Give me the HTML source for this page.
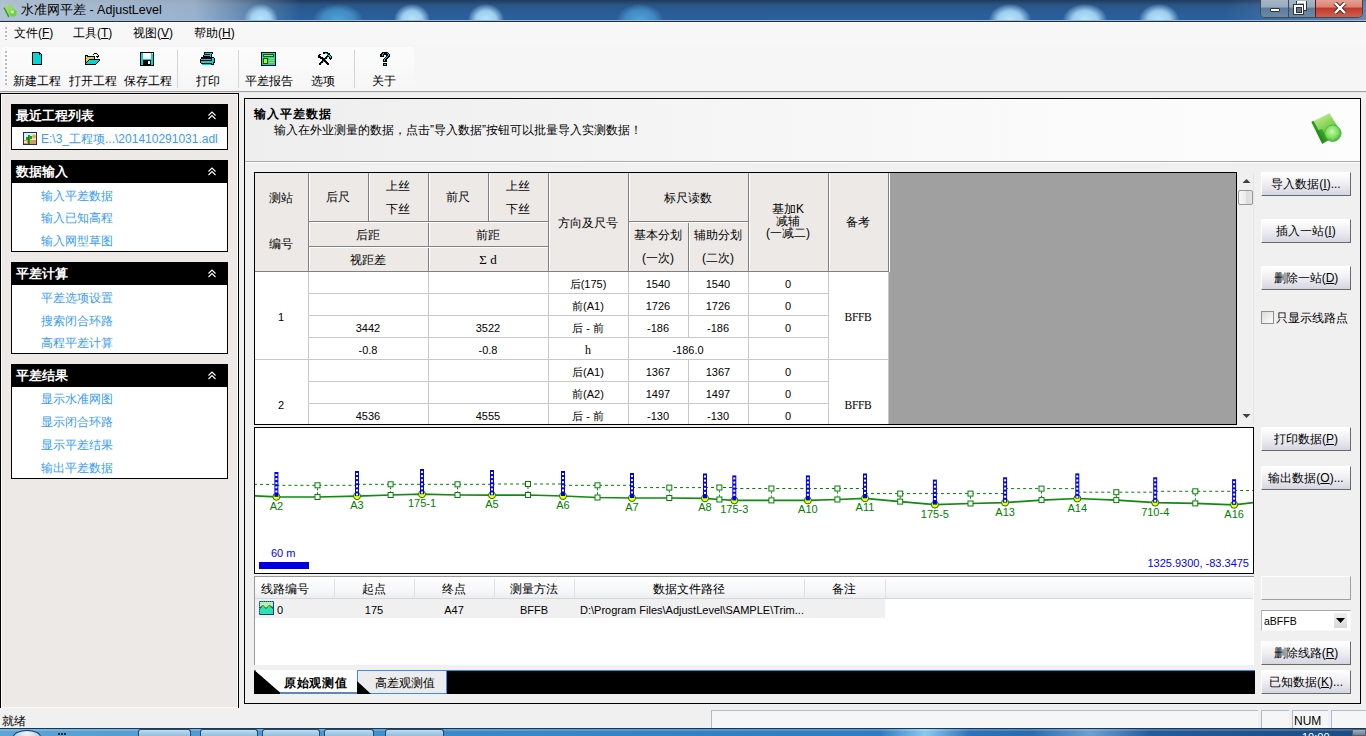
<!DOCTYPE html>
<html><head><meta charset="utf-8"><style>
*{box-sizing:border-box;margin:0;padding:0}
html,body{width:1366px;height:736px;overflow:hidden;background:#f0f0f0;font-family:"Liberation Sans",sans-serif;font-size:12px;color:#000}
.a{position:absolute}
.t{position:absolute;white-space:nowrap;line-height:12px}
.mono{font-family:"Liberation Mono",monospace;font-size:10px}
#title{left:0;top:0;width:1366px;height:20px;background:linear-gradient(180deg,#1f3a5c 0%,#2a5688 25%,#2a5e98 70%,#2660a0 100%);overflow:hidden}
.spot{position:absolute;border-radius:50%;background:radial-gradient(ellipse at center,rgba(185,228,252,1) 0%,rgba(170,218,248,.9) 40%,rgba(150,200,240,0) 72%)}
#menubar{left:0;top:23px;width:1366px;height:23px;background:#f7f7f7}
#toolbar{left:0;top:46px;width:1366px;height:45px;background:#f6f6f6}
.grip{position:absolute;width:2px;background:repeating-linear-gradient(180deg,#bcbcbc 0 2px,transparent 2px 4px)}
.sep{position:absolute;width:1px;background:#d5d5d5}
.hdr{position:absolute;left:11px;width:217px;height:23px;background:#000;color:#fff;font-weight:bold;font-size:13px}
.hdr span{position:absolute;left:5px;top:5px;line-height:13px}
.hdr i{position:absolute;left:197px;top:4px;font-style:normal;font-weight:normal;font-size:11px;line-height:11px}
.box{position:absolute;left:11px;width:217px;background:#fff;border:1px solid #000;border-top:none}
.lnk{position:absolute;left:41px;color:#3a9cf8;line-height:12px;white-space:nowrap}
.btn{position:absolute;left:1261px;width:90px;height:24px;border:1px solid #fff;border-right-color:#6a6a6a;border-bottom-color:#6a6a6a;background:linear-gradient(180deg,#ffffff 0%,#f2f2f6 40%,#d6d6e2 100%);text-align:center;line-height:22px;font-size:12px;white-space:nowrap}
.hc{position:absolute;background:#ece9e6;text-align:center}
.gl{position:absolute;background:#c8c8c8}
.dk{position:absolute;background:#808080}
.cell{position:absolute;text-align:center;white-space:nowrap;line-height:12px}
</style></head><body>
<div id="title" class="a">
<div class="a" style="left:0;top:0;width:300px;height:21px;background:linear-gradient(90deg,rgba(200,212,226,.85) 0%,rgba(190,205,222,.75) 65%,rgba(180,200,222,0) 100%)"></div>
<div class="spot" style="left:244px;top:4px;width:34px;height:32px"></div>
<div class="spot" style="left:394px;top:4px;width:36px;height:32px"></div>
<div class="spot" style="left:468px;top:4px;width:36px;height:32px"></div>
<div class="spot" style="left:989px;top:4px;width:42px;height:32px"></div>
<div class="spot" style="left:1063px;top:4px;width:44px;height:32px"></div>
<div class="spot" style="left:1139px;top:4px;width:40px;height:32px"></div>
<div class="a" style="left:313px;top:4px;width:50px;height:32px;border-radius:50%;background:radial-gradient(ellipse at center,rgba(80,170,225,.9) 0%,rgba(80,165,220,.6) 45%,rgba(80,160,220,0) 72%)"></div>
<div class="a" style="left:617px;top:4px;width:46px;height:32px;border-radius:50%;background:radial-gradient(ellipse at center,rgba(80,170,225,.9) 0%,rgba(80,165,220,.6) 45%,rgba(80,160,220,0) 72%)"></div>
<div class="a" style="left:1225px;top:0;width:141px;height:21px;background:linear-gradient(90deg,rgba(160,180,200,0),rgba(160,180,200,.5))"></div>
</div>
<div class="a" style="left:0;top:20px;width:1366px;height:1px;background:#a8bcd8"></div><div class="a" style="left:0;top:21px;width:1366px;height:1px;background:#1e2a40"></div><div class="a" style="left:0;top:22px;width:1366px;height:1px;background:#fff"></div>
<div class="t" style="left:21px;top:4px;font-size:12.5px;line-height:13px;color:#000">水准网平差 - AdjustLevel</div>
<div class="a" style="left:1260px;top:-1px;width:103px;height:19px;border:1px solid #3a4a5c;border-top:none;border-radius:0 0 5px 5px;overflow:hidden;background:#6f8aa8">
<div class="a" style="left:0;top:0;width:27px;height:18px;background:linear-gradient(180deg,#a9b8c8 0%,#96a9bd 45%,#5f7b9a 50%,#6d89a8 100%)"></div>
<div class="a" style="left:27px;top:0;width:1px;height:18px;background:#3a4a5c"></div>
<div class="a" style="left:28px;top:0;width:26px;height:18px;background:linear-gradient(180deg,#a9b8c8 0%,#96a9bd 45%,#5f7b9a 50%,#6d89a8 100%)"></div>
<div class="a" style="left:54px;top:0;width:1px;height:18px;background:#5a1a10"></div>
<div class="a" style="left:55px;top:0;width:48px;height:18px;background:linear-gradient(180deg,#e8a496 0%,#d98272 45%,#c0392b 50%,#d0604a 100%)"></div>
<div class="a" style="left:9px;top:9px;width:10px;height:4px;background:#fff;border:1px solid #333;border-radius:1px"></div>
<svg class="a" style="left:32px;top:2px" width="16" height="14" shape-rendering="crispEdges"><path d="M4 0 H13 V9 H11 V2 H4Z" fill="#fff" stroke="#333" stroke-width="0"/><rect x="3.5" y="-.5" width="10" height="10" fill="none" stroke="#333"/><rect x="4.5" y=".5" width="8" height="8" fill="none" stroke="#fff"/><rect x="0.5" y="3.5" width="10" height="10" fill="#fff" stroke="#333"/><rect x="3" y="6" width="5" height="5" fill="#5a7898" stroke="#333" stroke-width="1"/></svg>

<svg class="a" style="left:72px;top:3px" width="14" height="12"><path d="M2 1 L7 6 L12 1 M2 11 L7 6 L12 11" stroke="#3a2a2a" stroke-width="4.2" fill="none"/><path d="M2 1 L7 6 L12 1 M2 11 L7 6 L12 11" stroke="#fff" stroke-width="2.4" fill="none"/></svg>
</div>
<div id="menubar" class="a"></div>
<div class="grip" style="left:5px;top:27px;height:13px"></div>
<div class="t" style="left:14px;top:27px;font-size:12px">文件(<u>F</u>)</div>
<div class="t" style="left:73px;top:27px;font-size:12px">工具(<u>T</u>)</div>
<div class="t" style="left:133px;top:27px;font-size:12px">视图(<u>V</u>)</div>
<div class="t" style="left:194px;top:27px;font-size:12px">帮助(<u>H</u>)</div>
<div id="toolbar" class="a"></div>
<div class="a" style="left:2px;top:47px;width:412px;height:43px;border-radius:2px;background:linear-gradient(180deg,#fcfcfc,#f6f6f6)"></div>
<div class="a" style="left:0;top:91px;width:1366px;height:1px;background:#a0a0a0"></div>
<div class="a" style="left:0;top:92px;width:1366px;height:1px;background:#e8e8e8"></div>
<div class="grip" style="left:5px;top:51px;height:36px"></div>
<div class="sep" style="left:177px;top:50px;height:38px"></div>
<div class="sep" style="left:238px;top:50px;height:38px"></div>
<div class="sep" style="left:354px;top:50px;height:38px"></div>
<div class="t" style="left:13px;top:75px;font-size:12px">新建工程</div>
<div class="t" style="left:69px;top:75px;font-size:12px">打开工程</div>
<div class="t" style="left:124px;top:75px;font-size:12px">保存工程</div>
<div class="t" style="left:196px;top:75px;font-size:12px">打印</div>
<div class="t" style="left:245px;top:75px;font-size:12px">平差报告</div>
<div class="t" style="left:311px;top:75px;font-size:12px">选项</div>
<div class="t" style="left:372px;top:75px;font-size:12px">关于</div>
<svg class="a" style="left:32px;top:52px" width="11" height="13" shape-rendering="crispEdges"><path d="M0 0 H8 V1 H9 V2 H10 V13 H0Z" fill="#000"/><path d="M1 1 H7 V3 H9 V12 H1Z" fill="#00d8d8"/><rect x="8" y="2" width="1" height="1" fill="#00d8d8"/></svg>
<svg class="a" style="left:85px;top:52px" width="16" height="14" shape-rendering="crispEdges">
<path d="M0 3 H3 V4 H10 V7 H15 V8 L11 13 H0Z" fill="#000"/><path d="M1 4 H2 V5 H9 V7 H4 L1 11Z" fill="#d8d040"/><path d="M4 8 H14 L10 12 H1Z" fill="#00d8d8"/>
<path d="M8 2 H9 V1 H12 V2 H13 V3 H14 V5 H13 V6 H12 V5 H11 V4 H13 V3 H12 V2 H9 V3 H8Z" fill="#000"/></svg>
<svg class="a" style="left:140px;top:52px" width="14" height="14" shape-rendering="crispEdges"><rect x="0" y="0" width="14" height="14" fill="#000"/><rect x="1" y="1" width="12" height="12" fill="#00d8d8"/><rect x="3" y="1" width="8" height="6" fill="#fff"/><rect x="3" y="8" width="8" height="5" fill="#000"/><rect x="8" y="9" width="2" height="3" fill="#fff"/><rect x="12" y="1" width="1" height="1" fill="#fff"/></svg>
<svg class="a" style="left:200px;top:52px" width="16" height="14" shape-rendering="crispEdges">
<path d="M4 0 H13 V2 H12 V5 H3 V3 H4Z" fill="#000"/><path d="M5 1 H12 V2 H11 V5 H4 V3 H5Z" fill="#00d8d8"/><rect x="5" y="2" width="5" height="1" fill="#000"/><rect x="4" y="4" width="6" height="1" fill="#000"/>
<path d="M1 5 H14 V6 H15 V11 H14 V13 H2 V12 H1 V11 H0 V7 H1Z" fill="#000"/><path d="M1 7 H11 V8 H1Z M1 9 H12 V11 H1Z M2 12 H11 V13 H2Z M12 6 H14 V10 H13 V12 H12Z" fill="#00d8d8"/></svg>
<svg class="a" style="left:261px;top:52px" width="15" height="14" shape-rendering="crispEdges"><rect width="15" height="14" fill="#000"/><rect x="1" y="1" width="13" height="12" fill="#00d8d8"/>
<rect x="2" y="2" width="11" height="3" fill="#006000"/><rect x="3" y="3" width="9" height="1" fill="#e0d800"/><rect x="2" y="6" width="5" height="6" fill="#006000"/><rect x="3" y="7" width="3" height="4" fill="#e8e000"/>
<rect x="8" y="6" width="5" height="1" fill="#e0c800"/><rect x="8" y="8" width="5" height="1" fill="#e0c800"/><rect x="8" y="10" width="5" height="1" fill="#e0c800"/></svg>
<svg class="a" style="left:317px;top:52px" width="16" height="14" shape-rendering="crispEdges">
<path d="M2 2 H4 V3 H3 V4 H4 V5 H6 V6 H7 V7 H8 V8 H9 V9 H10 V10 H11 V11 H12 V13 H10 V12 H9 V11 H8 V10 H7 V9 H6 V8 H5 V7 H3 V6 H1 V3 H2Z" fill="#000"/>
<path d="M6 0 H11 V1 H13 V3 H14 V4 H15 V7 H14 V8 H13 V7 H12 V5 H11 V6 H10 V7 H9 V8 H8 V9 H7 V10 H6 V11 H5 V12 H4 V13 H2 V11 H3 V10 H4 V9 H5 V8 H6 V7 H7 V6 H8 V5 H9 V4 H10 V2 H6Z" fill="#000"/>
<path d="M8 1 H10 V2 H11 V3 H13 V4 H14 V6 H13 V5 H12 V4 H11 V3 H10 V2 H8Z" fill="#00d8d8"/><path d="M10 5 H11 V6 H10Z M8 7 H9 V8 H8Z M6 9 H7 V10 H6Z M4 11 H5 V12 H4Z" fill="#00d8d8"/></svg>
<svg class="a" style="left:380px;top:52px" width="10" height="14" shape-rendering="crispEdges">
<path d="M2 0 H8 V1 H9 V2 H10 V5 H9 V6 H8 V7 H7 V10 H3 V7 H4 V6 H5 V5 H6 V3 H4 V5 H0 V2 H1 V1 H2Z" fill="#000"/>
<path d="M3 1 H7 V2 H8 V4 H7 V5 H6 V6 H5 V7 H4 V9 H5 V7 H6 V6 H7 V5 H8 V4 H9 V2 H8 V1 H7Z M2 2 H3 V4 H2Z M3 1 H4 V2 H3Z" fill="#00d8d8"/>
<path d="M3 11 H7 V14 H3Z" fill="#000"/><rect x="4" y="12" width="2" height="1" fill="#00d8d8"/></svg>
<svg class="a" style="left:1px;top:3px" width="18" height="16" viewBox="0 0 36 36">
<path d="M3.4 11 L21.5 2.3 L33.8 22.3 L14.3 32.8 Z" fill="#9ad86a"/><path d="M3.4 11 L5.5 9.8 L16.5 30 L14.3 32.8 Z" fill="#2a9a20"/>
<circle cx="24.8" cy="22.3" r="8.2" fill="#6cd04a"/><circle cx="23" cy="20" r="4" fill="#c0f0a0"/></svg>
<div class="a" style="left:0;top:93px;width:239px;height:616px;background:#ece9e6;border:1px solid #000"></div>
<div class="a" style="left:1px;top:94px;width:237px;height:614px;border:1px solid #fbfaf8"></div>
<div class="hdr" style="top:104px"><span>最近工程列表</span><svg class="a" style="left:196px;top:6px" width="10" height="10"><path d="M1.5 5.5 L5 2 L8.5 5.5 M1.5 9 L5 5.5 L8.5 9" fill="none" stroke="#fff" stroke-width="1.1"/></svg></div>
<div class="box" style="top:127px;height:23px"></div>
<div class="hdr" style="top:160px"><span>数据输入</span><svg class="a" style="left:196px;top:6px" width="10" height="10"><path d="M1.5 5.5 L5 2 L8.5 5.5 M1.5 9 L5 5.5 L8.5 9" fill="none" stroke="#fff" stroke-width="1.1"/></svg></div>
<div class="box" style="top:183px;height:69px"></div>
<div class="lnk t" style="top:190px">输入平差数据</div>
<div class="lnk t" style="top:212px">输入已知高程</div>
<div class="lnk t" style="top:235px">输入网型草图</div>
<div class="hdr" style="top:262px"><span>平差计算</span><svg class="a" style="left:196px;top:6px" width="10" height="10"><path d="M1.5 5.5 L5 2 L8.5 5.5 M1.5 9 L5 5.5 L8.5 9" fill="none" stroke="#fff" stroke-width="1.1"/></svg></div>
<div class="box" style="top:285px;height:69px"></div>
<div class="lnk t" style="top:292px">平差选项设置</div>
<div class="lnk t" style="top:315px">搜索闭合环路</div>
<div class="lnk t" style="top:337px">高程平差计算</div>
<div class="hdr" style="top:364px"><span>平差结果</span><svg class="a" style="left:196px;top:6px" width="10" height="10"><path d="M1.5 5.5 L5 2 L8.5 5.5 M1.5 9 L5 5.5 L8.5 9" fill="none" stroke="#fff" stroke-width="1.1"/></svg></div>
<div class="box" style="top:387px;height:92px"></div>
<div class="lnk t" style="top:393px">显示水准网图</div>
<div class="lnk t" style="top:416px">显示闭合环路</div>
<div class="lnk t" style="top:439px">显示平差结果</div>
<div class="lnk t" style="top:462px">输出平差数据</div>
<svg class="a" style="left:23px;top:132px" width="14" height="13" shape-rendering="crispEdges"><rect x="0" y="0" width="14" height="13" fill="#2a2a70"/><rect x="1" y="1" width="12" height="11" fill="#d8ecfc"/><rect x="1" y="8" width="12" height="4" fill="#d89858"/><rect x="1" y="9" width="3" height="2" fill="#f0e890"/>
<circle cx="11" cy="4.5" r="2" fill="#f0b020" shape-rendering="auto"/><path d="M5 12 V3 H7 V12Z M3 5 H5 V8 H3Z M7 4 H9 V7 H7Z" fill="#20a020"/><path d="M5 3 H6 V12 H5Z" fill="#108010"/></svg>
<div class="lnk t" style="top:133px">E:\3_工程项...\201410291031.adl</div>
<div class="a" style="left:244px;top:98px;width:1117px;height:606px;border:1px solid #000;background:#f0f0f0"></div>
<div class="a" style="left:245px;top:99px;width:1115px;height:62px;background:linear-gradient(90deg,#eeeeee 0%,#f4f4f4 35%,#fafafa 70%,#fdfdfd 100%)"></div>
<div class="a" style="left:245px;top:161px;width:1115px;height:1px;background:#a8a8a8"></div>
<div class="a" style="left:245px;top:162px;width:1115px;height:1px;background:#fff"></div>
<div class="t" style="left:254px;top:108px;font-weight:bold;font-size:12px;letter-spacing:1px">输入平差数据</div>
<div class="t" style="left:274px;top:124px;font-size:12px">输入在外业测量的数据，点击”导入数据”按钮可以批量导入实测数据！</div>
<svg class="a" style="left:1308px;top:111px" width="36" height="36" viewBox="0 0 36 36">
<defs><linearGradient id="gm" x1="0" y1="0" x2=".6" y2="1"><stop offset="0" stop-color="#d8f5b8"/><stop offset=".45" stop-color="#8ed85a"/><stop offset="1" stop-color="#3aa82a"/></linearGradient>
<radialGradient id="gb" cx=".45" cy=".4" r=".65"><stop offset="0" stop-color="#c8f8b0"/><stop offset=".6" stop-color="#78dc58"/><stop offset="1" stop-color="#2aa42a"/></radialGradient></defs>
<path d="M3.4 11 L21.5 2.3 L33.8 22.3 L14.3 32.8 Z" fill="url(#gm)"/>
<path d="M3.4 11 L5.5 9.8 L16.5 30 L14.3 32.8 Z" fill="#2a9a20"/>
<path d="M8 20 L14.3 32.8 L20 29 L14 18Z" fill="#1f8a18" opacity=".7"/>
<circle cx="24.8" cy="22.3" r="8.2" fill="url(#gb)" stroke="#3cb43c" stroke-width=".8"/>
<path d="M17 22.3 H32.6 M24.8 14.3 V30.3" stroke="#b8f0a0" stroke-width=".5" opacity=".6"/>
</svg>
<div class="a" style="left:254px;top:172px;width:983px;height:253px;border:1px solid #000;background:#fff"></div>
<div class="a" style="left:889px;top:173px;width:347px;height:251px;background:#a0a0a0"></div>
<div class="a" style="left:255px;top:173px;width:634px;height:99px;background:#ece9e6"></div>
<div class="dk" style="left:308px;top:173px;width:1px;height:99px"></div>
<div class="a" style="left:309px;top:173px;width:1px;height:99px;background:#fff"></div>
<div class="dk" style="left:428px;top:173px;width:1px;height:99px"></div>
<div class="a" style="left:429px;top:173px;width:1px;height:99px;background:#fff"></div>
<div class="dk" style="left:548px;top:173px;width:1px;height:99px"></div>
<div class="a" style="left:549px;top:173px;width:1px;height:99px;background:#fff"></div>
<div class="dk" style="left:628px;top:173px;width:1px;height:99px"></div>
<div class="a" style="left:629px;top:173px;width:1px;height:99px;background:#fff"></div>
<div class="dk" style="left:748px;top:173px;width:1px;height:99px"></div>
<div class="a" style="left:749px;top:173px;width:1px;height:99px;background:#fff"></div>
<div class="dk" style="left:828px;top:173px;width:1px;height:99px"></div>
<div class="a" style="left:829px;top:173px;width:1px;height:99px;background:#fff"></div>
<div class="dk" style="left:888px;top:173px;width:1px;height:99px"></div>
<div class="a" style="left:889px;top:173px;width:1px;height:99px;background:#fff"></div>
<div class="dk" style="left:368px;top:173px;width:1px;height:49px"></div>
<div class="a" style="left:369px;top:173px;width:1px;height:49px;background:#fff"></div>
<div class="dk" style="left:488px;top:173px;width:1px;height:49px"></div>
<div class="a" style="left:489px;top:173px;width:1px;height:49px;background:#fff"></div>
<div class="dk" style="left:688px;top:222px;width:1px;height:50px"></div>
<div class="a" style="left:689px;top:222px;width:1px;height:50px;background:#fff"></div>
<div class="dk" style="left:309px;top:221px;width:239px;height:1px"></div>
<div class="a" style="left:309px;top:222px;width:239px;height:1px;background:#fff"></div>
<div class="dk" style="left:309px;top:246px;width:239px;height:1px"></div>
<div class="a" style="left:309px;top:247px;width:239px;height:1px;background:#fff"></div>
<div class="dk" style="left:629px;top:221px;width:119px;height:1px"></div>
<div class="a" style="left:629px;top:222px;width:119px;height:1px;background:#fff"></div>
<div class="dk" style="left:255px;top:271px;width:634px;height:1px"></div>
<div class="a" style="left:255px;top:272px;width:634px;height:1px;background:#fff"></div>
<div class="cell" style="left:221px;top:192px;width:120px;">测站</div>
<div class="cell" style="left:221px;top:238px;width:120px;">编号</div>
<div class="cell" style="left:278px;top:191px;width:120px;">后尺</div>
<div class="cell" style="left:338px;top:180px;width:120px;">上丝</div>
<div class="cell" style="left:338px;top:203px;width:120px;">下丝</div>
<div class="cell" style="left:398px;top:191px;width:120px;">前尺</div>
<div class="cell" style="left:458px;top:180px;width:120px;">上丝</div>
<div class="cell" style="left:458px;top:203px;width:120px;">下丝</div>
<div class="cell" style="left:308px;top:229px;width:120px;">后距</div>
<div class="cell" style="left:428px;top:229px;width:120px;">前距</div>
<div class="cell" style="left:308px;top:254px;width:120px;">视距差</div>
<div class="cell" style="left:428px;top:254px;width:120px;font-family:Liberation Serif,serif;font-size:13px">Σ d</div>
<div class="cell" style="left:528px;top:217px;width:120px;">方向及尺号</div>
<div class="cell" style="left:628px;top:192px;width:120px;">标尺读数</div>
<div class="cell" style="left:598px;top:229px;width:120px;">基本分划</div>
<div class="cell" style="left:658px;top:229px;width:120px;">辅助分划</div>
<div class="cell" style="left:598px;top:252px;width:120px;">(一次)</div>
<div class="cell" style="left:658px;top:252px;width:120px;">(二次)</div>
<div class="cell" style="left:728px;top:203px;width:120px;">基加K</div>
<div class="cell" style="left:728px;top:215px;width:120px;">减辅</div>
<div class="cell" style="left:728px;top:227px;width:120px;">(一减二)</div>
<div class="cell" style="left:798px;top:216px;width:120px;">备考</div>
<div class="gl" style="left:309px;top:293px;width:520px;height:1px"></div>
<div class="gl" style="left:309px;top:315px;width:520px;height:1px"></div>
<div class="gl" style="left:309px;top:337px;width:520px;height:1px"></div>
<div class="gl" style="left:309px;top:381px;width:520px;height:1px"></div>
<div class="gl" style="left:309px;top:403px;width:520px;height:1px"></div>
<div class="gl" style="left:255px;top:359px;width:634px;height:1px"></div>
<div class="gl" style="left:308px;top:272px;width:1px;height:152px"></div>
<div class="gl" style="left:428px;top:272px;width:1px;height:152px"></div>
<div class="gl" style="left:548px;top:272px;width:1px;height:152px"></div>
<div class="gl" style="left:628px;top:272px;width:1px;height:152px"></div>
<div class="gl" style="left:748px;top:272px;width:1px;height:152px"></div>
<div class="gl" style="left:828px;top:272px;width:1px;height:152px"></div>
<div class="gl" style="left:688px;top:272px;width:1px;height:65px"></div>
<div class="gl" style="left:688px;top:359px;width:1px;height:65px"></div>
<div class="gl" style="left:888px;top:272px;width:1px;height:152px"></div>
<div class="cell" style="left:221px;top:311.5px;width:120px;font-size:11px;line-height:11px">1</div>
<div class="cell" style="left:221px;top:399.5px;width:120px;font-size:11px;line-height:11px">2</div>
<div class="cell" style="left:308px;top:322.5px;width:120px;font-size:11px;line-height:11px">3442</div>
<div class="cell" style="left:428px;top:322.5px;width:120px;font-size:11px;line-height:11px">3522</div>
<div class="cell" style="left:308px;top:344.5px;width:120px;font-size:11px;line-height:11px">-0.8</div>
<div class="cell" style="left:428px;top:344.5px;width:120px;font-size:11px;line-height:11px">-0.8</div>
<div class="cell" style="left:308px;top:410.5px;width:120px;font-size:11px;line-height:11px">4536</div>
<div class="cell" style="left:428px;top:410.5px;width:120px;font-size:11px;line-height:11px">4555</div>
<div class="cell" style="left:528px;top:278.5px;width:120px;font-size:11px;line-height:11px">后(175)</div>
<div class="cell" style="left:598px;top:278.5px;width:120px;font-size:11px;line-height:11px">1540</div>
<div class="cell" style="left:658px;top:278.5px;width:120px;font-size:11px;line-height:11px">1540</div>
<div class="cell" style="left:728px;top:278.5px;width:120px;font-size:11px;line-height:11px">0</div>
<div class="cell" style="left:528px;top:300.5px;width:120px;font-size:11px;line-height:11px">前(A1)</div>
<div class="cell" style="left:598px;top:300.5px;width:120px;font-size:11px;line-height:11px">1726</div>
<div class="cell" style="left:658px;top:300.5px;width:120px;font-size:11px;line-height:11px">1726</div>
<div class="cell" style="left:728px;top:300.5px;width:120px;font-size:11px;line-height:11px">0</div>
<div class="cell" style="left:528px;top:322.5px;width:120px;font-size:11px;line-height:11px">后 - 前</div>
<div class="cell" style="left:598px;top:322.5px;width:120px;font-size:11px;line-height:11px">-186</div>
<div class="cell" style="left:658px;top:322.5px;width:120px;font-size:11px;line-height:11px">-186</div>
<div class="cell" style="left:728px;top:322.5px;width:120px;font-size:11px;line-height:11px">0</div>
<div class="cell" style="left:528px;top:366.5px;width:120px;font-size:11px;line-height:11px">后(A1)</div>
<div class="cell" style="left:598px;top:366.5px;width:120px;font-size:11px;line-height:11px">1367</div>
<div class="cell" style="left:658px;top:366.5px;width:120px;font-size:11px;line-height:11px">1367</div>
<div class="cell" style="left:728px;top:366.5px;width:120px;font-size:11px;line-height:11px">0</div>
<div class="cell" style="left:528px;top:388.5px;width:120px;font-size:11px;line-height:11px">前(A2)</div>
<div class="cell" style="left:598px;top:388.5px;width:120px;font-size:11px;line-height:11px">1497</div>
<div class="cell" style="left:658px;top:388.5px;width:120px;font-size:11px;line-height:11px">1497</div>
<div class="cell" style="left:728px;top:388.5px;width:120px;font-size:11px;line-height:11px">0</div>
<div class="cell" style="left:528px;top:410.5px;width:120px;font-size:11px;line-height:11px">后 - 前</div>
<div class="cell" style="left:598px;top:410.5px;width:120px;font-size:11px;line-height:11px">-130</div>
<div class="cell" style="left:658px;top:410.5px;width:120px;font-size:11px;line-height:11px">-130</div>
<div class="cell" style="left:728px;top:410.5px;width:120px;font-size:11px;line-height:11px">0</div>
<div class="cell" style="left:528px;top:344.5px;width:120px;font-size:11px;line-height:11px"><span style="font-family:Liberation Serif,serif;font-size:12px">h</span></div>
<div class="cell" style="left:628px;top:344.5px;width:120px;font-size:11px;line-height:11px">-186.0</div>
<div class="cell" style="left:798px;top:311.5px;width:120px;font-size:11px;line-height:11px"><span style="font-family:Liberation Serif,serif;font-size:11.5px;letter-spacing:-.3px">BFFB</span></div>
<div class="cell" style="left:798px;top:399.5px;width:120px;font-size:11px;line-height:11px"><span style="font-family:Liberation Serif,serif;font-size:11.5px;letter-spacing:-.3px">BFFB</span></div>
<div class="a" style="left:1237px;top:172px;width:16px;height:253px;background:#f0f0f0"></div>
<div class="a" style="left:1253px;top:173px;width:1px;height:251px;background:#e4e4e4"></div>
<svg class="a" style="left:1242px;top:178px" width="9" height="6"><path d="M0.5 5 L4.5 1 L8.5 5Z" fill="#404040"/></svg>
<svg class="a" style="left:1242px;top:413px" width="9" height="6"><path d="M0.5 1 L4.5 5 L8.5 1Z" fill="#404040"/></svg>
<div class="a" style="left:1238px;top:190px;width:15px;height:15px;border:1px solid #979797;border-radius:2px;background:linear-gradient(90deg,#f6f6f6 0%,#ececec 50%,#dcdcdc 51%,#e4e4e4 100%)"></div>
<div class="btn" style="top:172px">导入数据(<u>I</u>)...</div>
<div class="btn" style="top:219px">插入一站(<u>I</u>)</div>
<div class="btn" style="top:266px">删除一站(<u>D</u>)</div>
<div class="btn" style="top:427px">打印数据(<u>P</u>)</div>
<div class="btn" style="top:466px">输出数据(<u>O</u>)...</div>
<div class="btn" style="top:641px">删除线路(<u>R</u>)</div>
<div class="btn" style="top:670px">已知数据(<u>K</u>)...</div>
<div class="a" style="left:1261px;top:311px;width:13px;height:13px;border:1px solid #8f8f8f;background:linear-gradient(135deg,#dcdcdc,#fdfdfd)"></div>
<div class="t" style="left:1276px;top:312px">只显示线路点</div>
<div class="a" style="left:1261px;top:576px;width:90px;height:24px;border:1px solid #fff;border-right-color:#a0a0a0;border-bottom-color:#a0a0a0;background:#f0f0f0"></div>
<div class="a" style="left:1261px;top:610px;width:90px;height:21px;border:1px solid #f8f8f8;border-top-color:#a8a8a8;border-left-color:#b8b8b8;background:#fff"></div>
<div class="t" style="left:1264px;top:616px;font-size:10.5px;line-height:11px">aBFFB</div>
<div class="a" style="left:1334px;top:613px;width:13px;height:15px;background:linear-gradient(180deg,#f0f0f0,#d8d8d8)"></div>
<svg class="a" style="left:1336px;top:618px" width="9" height="6"><path d="M0 0 H9 L4.5 5Z" fill="#000"/></svg>
<div class="a" style="left:254px;top:427px;width:1000px;height:147px;border:1px solid #000;background:#fff;overflow:hidden">
<svg class="a" style="left:-1px;top:-1px" width="1000" height="147" viewBox="254 427 1000 147">
<polyline points="254.0,495.8 276.4,496.8 317.5,497.0 357.0,496.1 390.6,495.0 422.0,494.2 457.5,495.0 492.0,495.2 528.0,495.0 563.0,496.0 597.5,497.5 632.0,498.0 669.3,498.0 705.0,498.3 719.4,499.5 734.3,500.4 771.4,500.4 807.9,500.4 837.4,499.5 865.0,498.3 900.2,501.6 934.9,504.6 970.5,503.5 1005.1,502.6 1041.5,500.1 1077.3,498.5 1116.3,500.1 1155.2,502.6 1195.3,503.4 1234.1,504.8 1254.0,502.6" fill="none" stroke="#108a10" stroke-width="1.7"/>
<line x1="254" y1="484.4" x2="276.4" y2="484.4" stroke="#008000" stroke-width="1" stroke-dasharray="3,3"/>
<line x1="276.4" y1="485.3" x2="357" y2="485.3" stroke="#008000" stroke-width="1" stroke-dasharray="3,3"/>
<line x1="357" y1="484.3" x2="422" y2="484.3" stroke="#008000" stroke-width="1" stroke-dasharray="3,3"/>
<line x1="422" y1="484.3" x2="492" y2="484.3" stroke="#008000" stroke-width="1" stroke-dasharray="3,3"/>
<line x1="492" y1="484" x2="563" y2="484" stroke="#008000" stroke-width="1" stroke-dasharray="3,3"/>
<line x1="563" y1="485.3" x2="632" y2="485.3" stroke="#008000" stroke-width="1" stroke-dasharray="3,3"/>
<line x1="632" y1="487.6" x2="705" y2="487.6" stroke="#008000" stroke-width="1" stroke-dasharray="3,3"/>
<line x1="705" y1="487.5" x2="734.3" y2="487.5" stroke="#008000" stroke-width="1" stroke-dasharray="3,3"/>
<line x1="734.3" y1="488.5" x2="807.9" y2="488.5" stroke="#008000" stroke-width="1" stroke-dasharray="3,3"/>
<line x1="807.9" y1="488.5" x2="865" y2="488.5" stroke="#008000" stroke-width="1" stroke-dasharray="3,3"/>
<line x1="865" y1="493.6" x2="934.9" y2="493.6" stroke="#008000" stroke-width="1" stroke-dasharray="3,3"/>
<line x1="934.9" y1="493.6" x2="1005.1" y2="493.6" stroke="#008000" stroke-width="1" stroke-dasharray="3,3"/>
<line x1="1005.1" y1="488.6" x2="1077.3" y2="488.6" stroke="#008000" stroke-width="1" stroke-dasharray="3,3"/>
<line x1="1077.3" y1="492.2" x2="1155.2" y2="492.2" stroke="#008000" stroke-width="1" stroke-dasharray="3,3"/>
<line x1="1155.2" y1="491.3" x2="1234.1" y2="491.3" stroke="#008000" stroke-width="1" stroke-dasharray="3,3"/>
<line x1="1234.1" y1="490.5" x2="1254" y2="490.5" stroke="#008000" stroke-width="1" stroke-dasharray="3,3"/>
<line x1="317.5" y1="488.3" x2="317.5" y2="494" stroke="#008000" stroke-width="1" stroke-dasharray="2,2"/>
<rect x="315.0" y="494.5" width="5" height="5" fill="#fff" stroke="#008000" stroke-width="1"/>
<rect x="315.0" y="482.8" width="5" height="5" fill="#fff" stroke="#008000" stroke-width="1"/>
<line x1="390.6" y1="487.3" x2="390.6" y2="492" stroke="#008000" stroke-width="1" stroke-dasharray="2,2"/>
<rect x="388.1" y="492.5" width="5" height="5" fill="#fff" stroke="#008000" stroke-width="1"/>
<rect x="388.1" y="481.8" width="5" height="5" fill="#fff" stroke="#008000" stroke-width="1"/>
<line x1="457.5" y1="487.3" x2="457.5" y2="492" stroke="#008000" stroke-width="1" stroke-dasharray="2,2"/>
<rect x="455.0" y="492.5" width="5" height="5" fill="#fff" stroke="#008000" stroke-width="1"/>
<rect x="455.0" y="481.8" width="5" height="5" fill="#fff" stroke="#008000" stroke-width="1"/>
<line x1="528" y1="487" x2="528" y2="492" stroke="#008000" stroke-width="1" stroke-dasharray="2,2"/>
<rect x="525.5" y="492.5" width="5" height="5" fill="#fff" stroke="#008000" stroke-width="1"/>
<rect x="525.5" y="481.5" width="5" height="5" fill="#fff" stroke="#008000" stroke-width="1"/>
<line x1="597.5" y1="488.3" x2="597.5" y2="494.5" stroke="#008000" stroke-width="1" stroke-dasharray="2,2"/>
<rect x="595.0" y="495.0" width="5" height="5" fill="#fff" stroke="#008000" stroke-width="1"/>
<rect x="595.0" y="482.8" width="5" height="5" fill="#fff" stroke="#008000" stroke-width="1"/>
<line x1="669.3" y1="490.6" x2="669.3" y2="495" stroke="#008000" stroke-width="1" stroke-dasharray="2,2"/>
<rect x="666.8" y="495.5" width="5" height="5" fill="#fff" stroke="#008000" stroke-width="1"/>
<rect x="666.8" y="485.1" width="5" height="5" fill="#fff" stroke="#008000" stroke-width="1"/>
<line x1="719.4" y1="490.5" x2="719.4" y2="496.5" stroke="#008000" stroke-width="1" stroke-dasharray="2,2"/>
<rect x="716.9" y="497.0" width="5" height="5" fill="#fff" stroke="#008000" stroke-width="1"/>
<rect x="716.9" y="485.0" width="5" height="5" fill="#fff" stroke="#008000" stroke-width="1"/>
<line x1="771.4" y1="491.5" x2="771.4" y2="497.4" stroke="#008000" stroke-width="1" stroke-dasharray="2,2"/>
<rect x="768.9" y="497.9" width="5" height="5" fill="#fff" stroke="#008000" stroke-width="1"/>
<rect x="768.9" y="486.0" width="5" height="5" fill="#fff" stroke="#008000" stroke-width="1"/>
<line x1="837.4" y1="491.5" x2="837.4" y2="496.5" stroke="#008000" stroke-width="1" stroke-dasharray="2,2"/>
<rect x="834.9" y="497.0" width="5" height="5" fill="#fff" stroke="#008000" stroke-width="1"/>
<rect x="834.9" y="486.0" width="5" height="5" fill="#fff" stroke="#008000" stroke-width="1"/>
<line x1="900.2" y1="496.6" x2="900.2" y2="498.6" stroke="#008000" stroke-width="1" stroke-dasharray="2,2"/>
<rect x="897.7" y="499.1" width="5" height="5" fill="#fff" stroke="#008000" stroke-width="1"/>
<rect x="897.7" y="491.1" width="5" height="5" fill="#fff" stroke="#008000" stroke-width="1"/>
<line x1="970.5" y1="496.6" x2="970.5" y2="500.5" stroke="#008000" stroke-width="1" stroke-dasharray="2,2"/>
<rect x="968.0" y="501.0" width="5" height="5" fill="#fff" stroke="#008000" stroke-width="1"/>
<rect x="968.0" y="491.1" width="5" height="5" fill="#fff" stroke="#008000" stroke-width="1"/>
<line x1="1041.5" y1="491.6" x2="1041.5" y2="497.1" stroke="#008000" stroke-width="1" stroke-dasharray="2,2"/>
<rect x="1039.0" y="497.6" width="5" height="5" fill="#fff" stroke="#008000" stroke-width="1"/>
<rect x="1039.0" y="486.1" width="5" height="5" fill="#fff" stroke="#008000" stroke-width="1"/>
<line x1="1116.3" y1="495.2" x2="1116.3" y2="497.1" stroke="#008000" stroke-width="1" stroke-dasharray="2,2"/>
<rect x="1113.8" y="497.6" width="5" height="5" fill="#fff" stroke="#008000" stroke-width="1"/>
<rect x="1113.8" y="489.7" width="5" height="5" fill="#fff" stroke="#008000" stroke-width="1"/>
<line x1="1195.3" y1="494.3" x2="1195.3" y2="500.4" stroke="#008000" stroke-width="1" stroke-dasharray="2,2"/>
<rect x="1192.8" y="500.9" width="5" height="5" fill="#fff" stroke="#008000" stroke-width="1"/>
<rect x="1192.8" y="488.8" width="5" height="5" fill="#fff" stroke="#008000" stroke-width="1"/>
<circle cx="276.4" cy="496.8" r="3.5" fill="#ffff00" stroke="#008000" stroke-width="1"/>
<rect x="274.4" y="472" width="4" height="24.80000000000001" fill="#0000f0"/>
<rect x="275.4" y="474" width="2" height="2" fill="#fff"/>
<rect x="275.4" y="478.1" width="2" height="2" fill="#fff"/>
<rect x="275.4" y="482.20000000000005" width="2" height="2" fill="#fff"/>
<rect x="275.4" y="486.30000000000007" width="2" height="2" fill="#fff"/>
<rect x="275.4" y="490.4000000000001" width="2" height="2" fill="#fff"/>
<text x="276.4" y="509.8" text-anchor="middle" font-size="11" fill="#008000" font-family="Liberation Sans">A2</text>
<circle cx="357" cy="496.1" r="3.5" fill="#ffff00" stroke="#008000" stroke-width="1"/>
<rect x="355" y="471" width="4" height="25.100000000000023" fill="#0000f0"/>
<rect x="356" y="473" width="2" height="2" fill="#fff"/>
<rect x="356" y="477.1" width="2" height="2" fill="#fff"/>
<rect x="356" y="481.20000000000005" width="2" height="2" fill="#fff"/>
<rect x="356" y="485.30000000000007" width="2" height="2" fill="#fff"/>
<rect x="356" y="489.4000000000001" width="2" height="2" fill="#fff"/>
<rect x="356" y="493.5000000000001" width="2" height="2" fill="#fff"/>
<text x="357" y="509.1" text-anchor="middle" font-size="11" fill="#008000" font-family="Liberation Sans">A3</text>
<circle cx="422" cy="494.2" r="3.5" fill="#ffff00" stroke="#008000" stroke-width="1"/>
<rect x="420" y="469" width="4" height="25.19999999999999" fill="#0000f0"/>
<rect x="421" y="471" width="2" height="2" fill="#fff"/>
<rect x="421" y="475.1" width="2" height="2" fill="#fff"/>
<rect x="421" y="479.20000000000005" width="2" height="2" fill="#fff"/>
<rect x="421" y="483.30000000000007" width="2" height="2" fill="#fff"/>
<rect x="421" y="487.4000000000001" width="2" height="2" fill="#fff"/>
<rect x="421" y="491.5000000000001" width="2" height="2" fill="#fff"/>
<text x="422" y="507.2" text-anchor="middle" font-size="11" fill="#008000" font-family="Liberation Sans">175-1</text>
<circle cx="492" cy="495.2" r="3.5" fill="#ffff00" stroke="#008000" stroke-width="1"/>
<rect x="490" y="470" width="4" height="25.19999999999999" fill="#0000f0"/>
<rect x="491" y="472" width="2" height="2" fill="#fff"/>
<rect x="491" y="476.1" width="2" height="2" fill="#fff"/>
<rect x="491" y="480.20000000000005" width="2" height="2" fill="#fff"/>
<rect x="491" y="484.30000000000007" width="2" height="2" fill="#fff"/>
<rect x="491" y="488.4000000000001" width="2" height="2" fill="#fff"/>
<rect x="491" y="492.5000000000001" width="2" height="2" fill="#fff"/>
<text x="492" y="508.2" text-anchor="middle" font-size="11" fill="#008000" font-family="Liberation Sans">A5</text>
<circle cx="563" cy="496" r="3.5" fill="#ffff00" stroke="#008000" stroke-width="1"/>
<rect x="561" y="471" width="4" height="25" fill="#0000f0"/>
<rect x="562" y="473" width="2" height="2" fill="#fff"/>
<rect x="562" y="477.1" width="2" height="2" fill="#fff"/>
<rect x="562" y="481.20000000000005" width="2" height="2" fill="#fff"/>
<rect x="562" y="485.30000000000007" width="2" height="2" fill="#fff"/>
<rect x="562" y="489.4000000000001" width="2" height="2" fill="#fff"/>
<text x="563" y="509" text-anchor="middle" font-size="11" fill="#008000" font-family="Liberation Sans">A6</text>
<circle cx="632" cy="498" r="3.5" fill="#ffff00" stroke="#008000" stroke-width="1"/>
<rect x="630" y="473" width="4" height="25" fill="#0000f0"/>
<rect x="631" y="475" width="2" height="2" fill="#fff"/>
<rect x="631" y="479.1" width="2" height="2" fill="#fff"/>
<rect x="631" y="483.20000000000005" width="2" height="2" fill="#fff"/>
<rect x="631" y="487.30000000000007" width="2" height="2" fill="#fff"/>
<rect x="631" y="491.4000000000001" width="2" height="2" fill="#fff"/>
<text x="632" y="511" text-anchor="middle" font-size="11" fill="#008000" font-family="Liberation Sans">A7</text>
<circle cx="705" cy="498.3" r="3.5" fill="#ffff00" stroke="#008000" stroke-width="1"/>
<rect x="703" y="473.5" width="4" height="24.80000000000001" fill="#0000f0"/>
<rect x="704" y="475.5" width="2" height="2" fill="#fff"/>
<rect x="704" y="479.6" width="2" height="2" fill="#fff"/>
<rect x="704" y="483.70000000000005" width="2" height="2" fill="#fff"/>
<rect x="704" y="487.80000000000007" width="2" height="2" fill="#fff"/>
<rect x="704" y="491.9000000000001" width="2" height="2" fill="#fff"/>
<text x="705" y="511.3" text-anchor="middle" font-size="11" fill="#008000" font-family="Liberation Sans">A8</text>
<circle cx="734.3" cy="500.4" r="3.5" fill="#ffff00" stroke="#008000" stroke-width="1"/>
<rect x="732.3" y="475.4" width="4" height="25.0" fill="#0000f0"/>
<rect x="733.3" y="477.4" width="2" height="2" fill="#fff"/>
<rect x="733.3" y="481.5" width="2" height="2" fill="#fff"/>
<rect x="733.3" y="485.6" width="2" height="2" fill="#fff"/>
<rect x="733.3" y="489.70000000000005" width="2" height="2" fill="#fff"/>
<rect x="733.3" y="493.80000000000007" width="2" height="2" fill="#fff"/>
<text x="734.3" y="513.4" text-anchor="middle" font-size="11" fill="#008000" font-family="Liberation Sans">175-3</text>
<circle cx="807.9" cy="500.4" r="3.5" fill="#ffff00" stroke="#008000" stroke-width="1"/>
<rect x="805.9" y="475.4" width="4" height="25.0" fill="#0000f0"/>
<rect x="806.9" y="477.4" width="2" height="2" fill="#fff"/>
<rect x="806.9" y="481.5" width="2" height="2" fill="#fff"/>
<rect x="806.9" y="485.6" width="2" height="2" fill="#fff"/>
<rect x="806.9" y="489.70000000000005" width="2" height="2" fill="#fff"/>
<rect x="806.9" y="493.80000000000007" width="2" height="2" fill="#fff"/>
<text x="807.9" y="513.4" text-anchor="middle" font-size="11" fill="#008000" font-family="Liberation Sans">A10</text>
<circle cx="865" cy="498.3" r="3.5" fill="#ffff00" stroke="#008000" stroke-width="1"/>
<rect x="863" y="473.5" width="4" height="24.80000000000001" fill="#0000f0"/>
<rect x="864" y="475.5" width="2" height="2" fill="#fff"/>
<rect x="864" y="479.6" width="2" height="2" fill="#fff"/>
<rect x="864" y="483.70000000000005" width="2" height="2" fill="#fff"/>
<rect x="864" y="487.80000000000007" width="2" height="2" fill="#fff"/>
<rect x="864" y="491.9000000000001" width="2" height="2" fill="#fff"/>
<text x="865" y="511.3" text-anchor="middle" font-size="11" fill="#008000" font-family="Liberation Sans">A11</text>
<circle cx="934.9" cy="504.6" r="3.5" fill="#ffff00" stroke="#008000" stroke-width="1"/>
<rect x="932.9" y="479.6" width="4" height="25.0" fill="#0000f0"/>
<rect x="933.9" y="481.6" width="2" height="2" fill="#fff"/>
<rect x="933.9" y="485.70000000000005" width="2" height="2" fill="#fff"/>
<rect x="933.9" y="489.80000000000007" width="2" height="2" fill="#fff"/>
<rect x="933.9" y="493.9000000000001" width="2" height="2" fill="#fff"/>
<rect x="933.9" y="498.0000000000001" width="2" height="2" fill="#fff"/>
<text x="934.9" y="517.6" text-anchor="middle" font-size="11" fill="#008000" font-family="Liberation Sans">175-5</text>
<circle cx="1005.1" cy="502.6" r="3.5" fill="#ffff00" stroke="#008000" stroke-width="1"/>
<rect x="1003.1" y="477.3" width="4" height="25.30000000000001" fill="#0000f0"/>
<rect x="1004.1" y="479.3" width="2" height="2" fill="#fff"/>
<rect x="1004.1" y="483.40000000000003" width="2" height="2" fill="#fff"/>
<rect x="1004.1" y="487.50000000000006" width="2" height="2" fill="#fff"/>
<rect x="1004.1" y="491.6000000000001" width="2" height="2" fill="#fff"/>
<rect x="1004.1" y="495.7000000000001" width="2" height="2" fill="#fff"/>
<rect x="1004.1" y="499.8000000000001" width="2" height="2" fill="#fff"/>
<text x="1005.1" y="515.6" text-anchor="middle" font-size="11" fill="#008000" font-family="Liberation Sans">A13</text>
<circle cx="1077.3" cy="498.5" r="3.5" fill="#ffff00" stroke="#008000" stroke-width="1"/>
<rect x="1075.3" y="473.4" width="4" height="25.100000000000023" fill="#0000f0"/>
<rect x="1076.3" y="475.4" width="2" height="2" fill="#fff"/>
<rect x="1076.3" y="479.5" width="2" height="2" fill="#fff"/>
<rect x="1076.3" y="483.6" width="2" height="2" fill="#fff"/>
<rect x="1076.3" y="487.70000000000005" width="2" height="2" fill="#fff"/>
<rect x="1076.3" y="491.80000000000007" width="2" height="2" fill="#fff"/>
<rect x="1076.3" y="495.9000000000001" width="2" height="2" fill="#fff"/>
<text x="1077.3" y="511.5" text-anchor="middle" font-size="11" fill="#008000" font-family="Liberation Sans">A14</text>
<circle cx="1155.2" cy="502.6" r="3.5" fill="#ffff00" stroke="#008000" stroke-width="1"/>
<rect x="1153.2" y="477.3" width="4" height="25.30000000000001" fill="#0000f0"/>
<rect x="1154.2" y="479.3" width="2" height="2" fill="#fff"/>
<rect x="1154.2" y="483.40000000000003" width="2" height="2" fill="#fff"/>
<rect x="1154.2" y="487.50000000000006" width="2" height="2" fill="#fff"/>
<rect x="1154.2" y="491.6000000000001" width="2" height="2" fill="#fff"/>
<rect x="1154.2" y="495.7000000000001" width="2" height="2" fill="#fff"/>
<rect x="1154.2" y="499.8000000000001" width="2" height="2" fill="#fff"/>
<text x="1155.2" y="515.6" text-anchor="middle" font-size="11" fill="#008000" font-family="Liberation Sans">710-4</text>
<circle cx="1234.1" cy="504.8" r="3.5" fill="#ffff00" stroke="#008000" stroke-width="1"/>
<rect x="1232.1" y="479.2" width="4" height="25.600000000000023" fill="#0000f0"/>
<rect x="1233.1" y="481.2" width="2" height="2" fill="#fff"/>
<rect x="1233.1" y="485.3" width="2" height="2" fill="#fff"/>
<rect x="1233.1" y="489.40000000000003" width="2" height="2" fill="#fff"/>
<rect x="1233.1" y="493.50000000000006" width="2" height="2" fill="#fff"/>
<rect x="1233.1" y="497.6000000000001" width="2" height="2" fill="#fff"/>
<rect x="1233.1" y="501.7000000000001" width="2" height="2" fill="#fff"/>
<text x="1234.1" y="517.8" text-anchor="middle" font-size="11" fill="#008000" font-family="Liberation Sans">A16</text>
<text x="271" y="557" font-size="11" fill="#0000ff" font-family="Liberation Sans">60 m</text>
<rect x="259" y="562" width="50" height="7" fill="#0000e0"/>
<text x="1249" y="566.5" text-anchor="end" font-size="11" fill="#0000ff" font-family="Liberation Sans">1325.9300, -83.3475</text>
</svg>
</div>
<div class="a" style="left:254px;top:576px;width:1000px;height:89px;border:1px solid #9a9a9a;border-right:none;border-bottom:none;background:#fff"></div>
<div class="a" style="left:255px;top:577px;width:998px;height:22px;background:linear-gradient(180deg,#ffffff 0%,#f7f8f9 60%,#eceef0 100%);border-bottom:1px solid #d8d8d8"></div>
<div class="a" style="left:334px;top:579px;width:1px;height:19px;background:#e0e0e0"></div>
<div class="a" style="left:414px;top:579px;width:1px;height:19px;background:#e0e0e0"></div>
<div class="a" style="left:494px;top:579px;width:1px;height:19px;background:#e0e0e0"></div>
<div class="a" style="left:574px;top:579px;width:1px;height:19px;background:#e0e0e0"></div>
<div class="a" style="left:804px;top:579px;width:1px;height:19px;background:#e0e0e0"></div>
<div class="a" style="left:885px;top:579px;width:1px;height:19px;background:#e0e0e0"></div>
<div class="t" style="left:261px;top:583px">线路编号</div>
<div class="cell" style="left:314px;top:583px;width:120px">起点</div>
<div class="cell" style="left:394px;top:583px;width:120px">终点</div>
<div class="cell" style="left:474px;top:583px;width:120px">测量方法</div>
<div class="cell" style="left:629px;top:583px;width:120px">数据文件路径</div>
<div class="cell" style="left:784px;top:583px;width:120px">备注</div>
<div class="a" style="left:255px;top:599px;width:630px;height:19px;background:#f0f0f0"></div>
<svg class="a" style="left:259px;top:601px" width="15" height="14" shape-rendering="crispEdges"><rect x="0" y="0" width="15" height="14" fill="#1a3a8a"/><rect x="1" y="1" width="13" height="12" fill="#30e0b0"/><rect x="1" y="1" width="13" height="5" fill="#b8f0a8"/><path d="M1 8 L4 5 L7 8 L10 5 L14 8 V6 L10 4 L7 7 L4 4 L1 6Z" fill="#1a6a4a" shape-rendering="auto"/><rect x="0" y="0" width="15" height="14" fill="none" stroke="#3a8af0" stroke-dasharray="1,1"/></svg>
<div class="t" style="left:277px;top:605px;font-size:11px;line-height:11px">0</div>
<div class="cell" style="left:314px;top:605px;width:120px;font-size:11px;line-height:11px">175</div>
<div class="cell" style="left:394px;top:605px;width:120px;font-size:11px;line-height:11px">A47</div>
<div class="cell" style="left:474px;top:605px;width:120px;font-size:11px;line-height:11px">BFFB</div>
<div class="t" style="left:580px;top:605px;font-size:11px;line-height:11px">D:\Program Files\AdjustLevel\SAMPLE\Trim...</div>
<div class="a" style="left:254px;top:670px;width:1001px;height:24px;background:#000"></div>
<div class="a" style="left:254px;top:670px;width:1001px;height:1px;background:#2a8ae8"></div>
<svg class="a" style="left:254px;top:670px" width="200" height="24">
<path d="M0,0 L103,0 L103,22.5 L26,22.5 Z" fill="#fff"/>
<path d="M26,23.5 H103" stroke="#3a90e8" stroke-width="1"/>
<path d="M0,0 L26,23 L26,24 L0,24 Z" fill="#000"/>
<path d="M0,0 L2,0 L2,1.5Z" fill="#3a90e8"/>
<path d="M103.5,0.5 H192.5 V23.5 H103.5 Z" fill="#ececec" stroke="#3a90e8" stroke-width="1"/>
<path d="M103,11 L117,24 L103,24Z" fill="#000"/>
</svg>
<div class="t" style="left:284px;top:677px;font-weight:bold;letter-spacing:0.7px">原始观测值</div>
<div class="t" style="left:375px;top:677px">高差观测值</div>
<div class="a" style="left:0;top:708px;width:1366px;height:20px;background:#f0f0f0"></div>
<div class="t" style="left:2px;top:715px">就绪</div>
<div class="a" style="left:711px;top:710px;width:547px;height:18px;border-top:1px solid #a8bcd4;border-left:1px solid #a8bcd4;background:#f6f6f6"></div>
<div class="a" style="left:1261px;top:710px;width:28px;height:18px;border-top:1px solid #a8bcd4;border-left:1px solid #a8bcd4;background:#f6f6f6"></div>
<div class="a" style="left:1292px;top:710px;width:36px;height:18px;border-top:1px solid #a8bcd4;border-left:1px solid #a8bcd4;background:#f6f6f6"></div>
<div class="a" style="left:1331px;top:710px;width:35px;height:18px;border-top:1px solid #a8bcd4;border-left:1px solid #a8bcd4;background:#f6f6f6"></div>
<div class="t" style="left:1294px;top:716px;font-size:12px;line-height:11px">NUM</div>
<div class="a" style="left:0;top:728px;width:1366px;height:8px;background:linear-gradient(90deg,#5ea4d4 0px,#4a96d0 300px,#3a8ac8 440px,#2f7cc2 880px,#8cc8f0 925px,#2c72b8 970px,#225c9c 1150px,#1a4a82 1366px)"></div>
<div class="a" style="left:0;top:728px;width:1366px;height:1px;background:#1d3550"></div>
<div class="a" style="left:0;top:729px;width:1366px;height:2px;background:rgba(255,255,255,.18)"></div>
<div class="t" style="left:1302px;top:731px;color:#fff;font-size:11px">10:00</div>
<div class="a" style="left:1352px;top:729px;width:14px;height:7px;border:1px solid #506070;background:linear-gradient(180deg,#a0b0c0,#708090)"></div>
<div class="a" style="left:13px;top:730px;width:28px;height:14px;border-radius:50%;border:1px solid #1a3a60;background:radial-gradient(ellipse at 50% 20%,#f0f4f8,#a8c0d8)"></div>
<div class="a" style="left:58px;top:733px;width:8px;height:2px;background:repeating-linear-gradient(90deg,#1a2a40 0 2px,transparent 2px 3px)"></div>
<div class="a" style="left:138px;top:729px;width:53px;height:8px;border:1px solid #2a4a6a;border-bottom:none;border-radius:3px 3px 0 0;background:linear-gradient(180deg,#c0dcef,#8ab8dc)"></div>
<div class="a" style="left:200px;top:729px;width:58px;height:8px;border:1px solid #2a4a6a;border-bottom:none;border-radius:3px 3px 0 0;background:linear-gradient(180deg,#c0dcef,#8ab8dc)"></div>
<div class="a" style="left:262px;top:729px;width:58px;height:8px;border:1px solid #2a4a6a;border-bottom:none;border-radius:3px 3px 0 0;background:linear-gradient(180deg,#c0dcef,#8ab8dc)"></div>
<div class="a" style="left:324px;top:729px;width:50px;height:8px;border:1px solid #2a4a6a;border-bottom:none;border-radius:3px 3px 0 0;background:linear-gradient(180deg,#c0dcef,#8ab8dc)"></div>
<div class="a" style="left:385px;top:729px;width:59px;height:8px;border:1px solid #2a4a6a;border-bottom:none;border-radius:3px 3px 0 0;background:linear-gradient(180deg,#c0dcef,#8ab8dc)"></div>
<div class="a" style="left:1030px;top:729px;width:120px;height:7px;background:linear-gradient(90deg,rgba(255,255,255,0),rgba(180,220,250,.5),rgba(255,255,255,0))"></div>
</body></html>
